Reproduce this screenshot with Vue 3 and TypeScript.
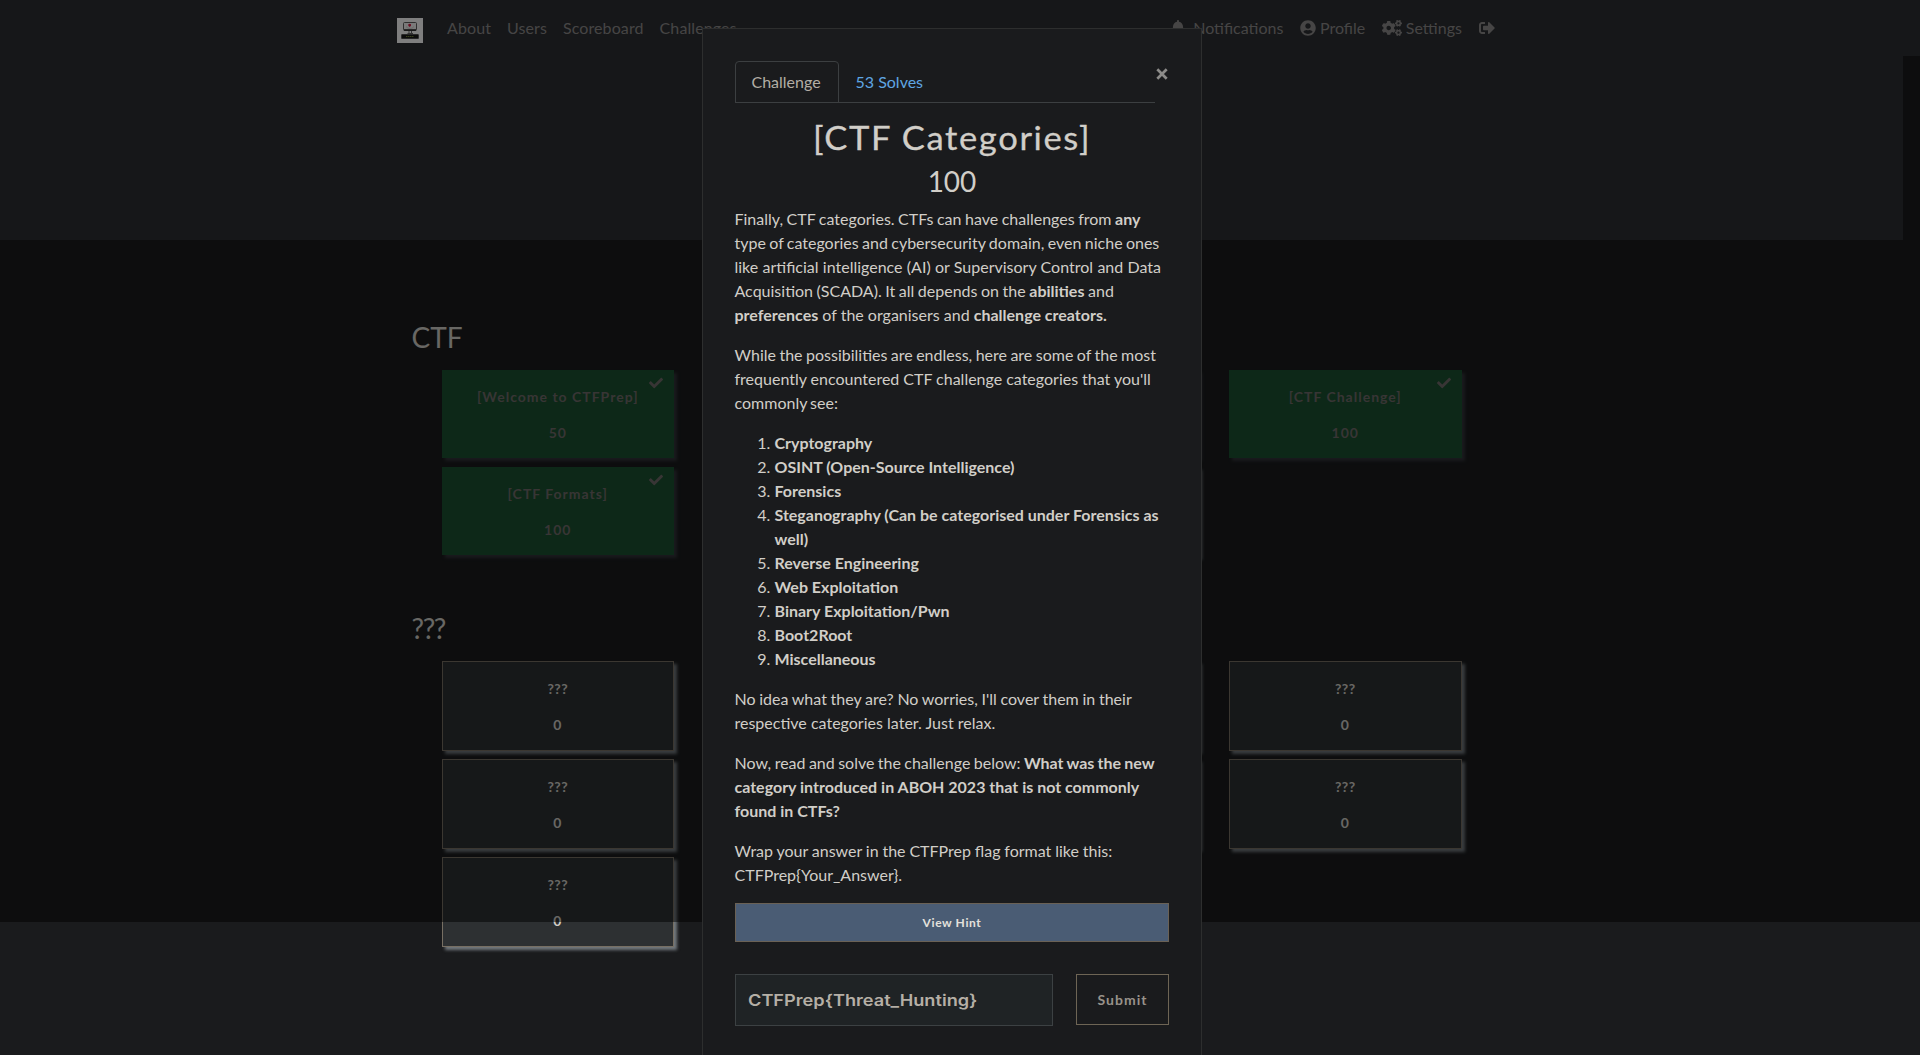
<script setup lang="ts">
interface Card {
  name?: string
  value?: number
  solved?: boolean
}

interface Line {
  html: string
  gap?: number
}

// Cards in the two middle columns sit behind the dialog and carry no label.
const sections: { title: string; rows: Card[][] }[] = [
  {
    title: 'CTF',
    rows: [
      [
        { name: '[Welcome to CTFPrep]', value: 50, solved: true },
        { solved: true },
        { solved: true },
        { name: '[CTF Challenge]', value: 100, solved: true },
      ],
      [{ name: '[CTF Formats]', value: 100, solved: true }, { solved: true }, {}],
    ],
  },
  {
    title: '???',
    rows: [
      [{ name: '???', value: 0 }, {}, {}, { name: '???', value: 0 }],
      [{ name: '???', value: 0 }, {}, {}, { name: '???', value: 0 }],
      [{ name: '???', value: 0 }],
    ],
  },
]

const intro: Line[][] = [
  [
    { html: 'Finally, CTF categories. CTFs can have challenges from <b>any</b>', gap: -0.6 },
    { html: 'type of categories and cybersecurity domain, even niche ones', gap: -0.75 },
    { html: 'like artificial intelligence (AI) or Supervisory Control and Data', gap: 0.2 },
    { html: 'Acquisition (SCADA). It all depends on the <b>abilities</b> and', gap: -0.55 },
    { html: '<b>preferences</b> of the organisers and <b>challenge creators.</b>' },
  ],
  [
    { html: 'While the possibilities are endless, here are some of the most', gap: -0.65 },
    { html: "frequently encountered CTF challenge categories that you'll", gap: -0.1 },
    { html: 'commonly see:', gap: -1 },
  ],
]

const outro: Line[][] = [
  [
    { html: "No idea what they are? No worries, I'll cover them in their", gap: -0.4 },
    { html: 'respective categories later. Just relax.', gap: 0.1 },
  ],
  [
    { html: 'Now, read and solve the challenge below: <b>What was the new</b>', gap: -0.7 },
    { html: '<b>category introduced in ABOH 2023 that is not commonly</b>' },
    { html: '<b>found in CTFs?</b>' },
  ],
  [
    { html: 'Wrap your answer in the CTFPrep flag format like this:', gap: -0.25 },
    { html: 'CTFPrep{Your_Answer}.' },
  ],
]

const topics: string[] = [
  'Cryptography',
  'OSINT (Open-Source Intelligence)',
  'Forensics',
  'Steganography (Can be categorised under Forensics as well)',
  'Reverse Engineering',
  'Web Exploitation',
  'Binary Exploitation/Pwn',
  'Boot2Root',
  'Miscellaneous',
]

const smallGear =
  'M512.1 191l-8.2 14.3c-3 5.3-9.4 7.5-15.1 5.4-11.8-4.4-22.6-10.7-32.1-18.6-4.6-3.8-5.8-10.5-2.8-15.7l8.2-14.3c-6.9-8-12.3-17.3-15.9-27.4h-16.5c-6 0-11.2-4.3-12.2-10.3-2-12-2.1-24.6 0-37.1 1-6 6.2-10.4 12.2-10.4h16.5c3.6-10.1 9-19.4 15.9-27.4l-8.2-14.3c-3-5.2-1.9-11.9 2.8-15.7 9.5-7.9 20.4-14.2 32.1-18.6 5.7-2.1 12.1.1 15.1 5.4l8.2 14.3c10.5-1.9 21.2-1.9 31.7 0L552 6.3c3-5.3 9.4-7.5 15.1-5.4 11.8 4.4 22.6 10.7 32.1 18.6 4.6 3.8 5.8 10.5 2.8 15.7l-8.2 14.3c6.9 8 12.3 17.3 15.9 27.4h16.5c6 0 11.2 4.3 12.2 10.3 2 12 2.1 24.6 0 37.1-1 6-6.2 10.4-12.2 10.4h-16.5c-3.6 10.1-9 19.4-15.9 27.4l8.2 14.3c3 5.2 1.9 11.9-2.8 15.7-9.5 7.9-20.4 14.2-32.1 18.6-5.7 2.1-12.1-.1-15.1-5.4l-8.2-14.3c-10.4 1.9-21.2 1.9-31.7 0zm-10.5-58.8c38.5 29.6 82.4-14.3 52.8-52.8-38.5-29.7-82.4 14.3-52.8 52.8z'
const bigGear =
  'M386.3 286.1l33.7 16.8c10.1 5.8 14.5 18.1 10.5 29.1-8.9 24.2-26.4 46.4-42.6 65.8-7.4 8.9-20.2 11.1-30.3 5.3l-29.1-16.8c-16 13.7-34.6 24.6-54.9 31.7v33.6c0 11.6-8.3 21.6-19.7 23.6-24.6 4.2-50.4 4.4-75.9 0-11.5-2-20-11.9-20-23.6V418c-20.3-7.2-38.9-18-54.9-31.7L74 403c-10 5.8-22.9 3.6-30.3-5.3-16.2-19.4-33.3-41.6-42.2-65.7-4-10.9.4-23.2 10.5-29.1l33.3-16.8c-3.9-20.9-3.9-42.4 0-63.4L12 205.8c-10.1-5.8-14.6-18.1-10.5-29 8.9-24.2 26-46.4 42.2-65.8 7.4-8.9 20.2-11.1 30.3-5.3l29.1 16.8c16-13.7 34.6-24.6 54.9-31.7V57.1c0-11.5 8.2-21.5 19.6-23.5 24.6-4.2 50.5-4.4 76-.1 11.5 2 20 11.9 20 23.6v33.6c20.3 7.2 38.9 18 54.9 31.7l29.1-16.8c10-5.8 22.9-3.6 30.3 5.3 16.2 19.4 33.2 41.6 42.1 65.8 4 10.9.1 23.2-10 29.1l-33.7 16.8c3.9 21 3.9 42.5 0 63.5zm-117.6 21.1c59.2-77-28.7-164.9-105.7-105.7-59.2 77 28.7 164.9 105.7 105.7z'
</script>

<template>
  <div class="page">
    <nav class="navbar">
      <div class="nav-inner">
        <svg class="logo" viewBox="0 0 26 25">
          <rect width="26" height="25" fill="#fff" />
          <rect x="6.5" y="4.5" width="13" height="8" rx="1" fill="#f4f4f4" stroke="#606060" />
          <path d="M7 12h12" stroke="#2a2a2a" stroke-width="1.6" />
          <path d="M11.3 6.3l1.3-.6 1.4.6v1.4l-1.3 1.2-1.4-1.2z" fill="#d8204a" />
          <path d="M9 8.5l2 1.8h4l2-1.8" fill="none" stroke="#ccc" stroke-width=".8" />
          <path d="M12 13v2.500M14.500 13v2.500M10.500 15.500h5.500" stroke="#666" />
          <rect x="4.3" y="16.2" width="17.4" height="4.6" rx=".6" fill="#181818" />
          <path d="M9 18.5h8" stroke="#70803a" stroke-width="1.2" stroke-dasharray="1.5 .5" />
        </svg>
        <div class="links left">
          <a>About</a><a>Users</a><a>Scoreboard</a><a>Challenges</a>
        </div>
        <div class="links right">
          <a>
            <svg class="bell" viewBox="0 0 448 512"><path fill="currentColor" d="M224 512c35.320 0 63.970-28.650 63.970-64H160.030c0 35.350 28.650 64 63.970 64zm215.390-149.710c-19.320-20.760-55.470-51.990-55.470-154.290 0-77.700-54.480-139.900-127.940-155.160V32c0-17.670-14.320-32-31.980-32s-31.980 14.330-31.980 32v20.840C118.560 68.100 64.080 130.300 64.080 208c0 102.300-36.150 133.530-55.470 154.290-6 6.450-8.660 14.160-8.610 21.710.11 16.400 12.980 32 32.100 32h383.800c19.120 0 32-15.600 32.100-32 .05-7.550-2.610-15.270-8.610-21.710z" /></svg><span>Notifications</span>
          </a>
          <a>
            <svg class="user" viewBox="0 0 496 512"><path fill="currentColor" d="M248 8C111 8 0 119 0 256s111 248 248 248 248-111 248-248S385 8 248 8zm0 96c48.600 0 88 39.400 88 88s-39.400 88-88 88-88-39.400-88-88 39.400-88 88-88zm0 344c-58.700 0-111.300-26.600-146.500-68.200 18.800-35.400 55.600-59.800 98.500-59.800 2.400 0 4.800.4 7.100 1.100 13 4.200 26.600 6.900 40.900 6.900 14.300 0 28-2.700 40.900-6.900 2.300-.7 4.700-1.100 7.100-1.100 42.900 0 79.700 24.400 98.500 59.800C359.300 421.400 306.700 448 248 448z" /></svg><span>Profile</span>
          </a>
          <a>
            <svg class="cogs" viewBox="0 0 640 512" fill="currentColor">
              <path :d="smallGear" />
              <path :d="bigGear" />
              <path :d="smallGear" transform="translate(0 298.9)" />
            </svg><span>Settings</span>
          </a>
          <a>
            <svg class="exit" viewBox="0 0 512 512"><path fill="currentColor" d="M497 273L329 441c-15 15-41 4.500-41-17v-96H152c-13.300 0-24-10.700-24-24v-96c0-13.300 10.700-24 24-24h136V88c0-21.400 25.900-32 41-17l168 168c9.300 9.400 9.300 24.600 0 34zM192 436v-40c0-6.600-5.400-12-12-12H96c-17.700 0-32-14.300-32-32V160c0-17.700 14.300-32 32-32h84c6.600 0 12-5.400 12-12V76c0-6.600-5.400-12-12-12H96c-53 0-96 43-96 96v192c0 53 43 96 96 96h84c6.600 0 12-5.400 12-12z" /></svg>
          </a>
        </div>
      </div>
    </nav>
    <header class="jumbotron"></header>
    <main class="board">
      <section v-for="s in sections" :key="s.title" class="category">
        <h3 :class="{ marks: s.title === '???' }">{{ s.title }}</h3>
        <div v-for="(row, i) in s.rows" :key="i" class="row">
          <div v-for="(c, j) in row" :key="j" class="card" :class="{ solved: c.solved }">
            <template v-if="c.name">
              <svg v-if="c.solved" class="check" viewBox="0 0 512 512"><path fill="currentColor" d="M173.898 439.404l-166.400-166.400c-9.997-9.997-9.997-26.206 0-36.204l36.203-36.204c9.997-9.998 26.207-9.998 36.204 0L192 312.690 432.095 72.596c9.997-9.997 26.207-9.997 36.204 0l36.203 36.204c9.997 9.997 9.997 26.206 0 36.204l-294.400 294.401c-9.998 9.997-26.207 9.997-36.204-.001z" /></svg>
              <p :class="{ 'marks-sm': c.name === '???' }">{{ c.name }}</p>
              <span>{{ c.value }}</span>
            </template>
          </div>
        </div>
      </section>
    </main>
    <div class="backdrop"></div>

    <div class="modal">
      <div class="tab-line">
        <div class="tabs">
          <a class="tab active">Challenge</a>
          <a class="tab">53 Solves</a>
        </div>
        <button class="close" aria-label="Close">
          <svg viewBox="0 0 12 12"><path d="M1.3 1.3l9.4 9.4M10.7 1.3l-9.4 9.4" stroke="currentColor" stroke-width="2.7" /></svg>
        </button>
      </div>
      <h2>[CTF Categories]</h2>
      <h3 class="points">100</h3>
      <div class="desc">
        <p v-for="(p, i) in intro" :key="i">
          <span v-for="l in p" :key="l.html" class="line" :style="{ wordSpacing: (l.gap ?? 0) + 'px' }" v-html="l.html"></span>
        </p>
        <ol>
          <li v-for="t in topics" :key="t"><b>{{ t }}</b></li>
        </ol>
        <p v-for="(p, i) in outro" :key="i">
          <span v-for="l in p" :key="l.html" class="line" :style="{ wordSpacing: (l.gap ?? 0) + 'px' }" v-html="l.html"></span>
        </p>
      </div>
      <button class="hint">View Hint</button>
      <div class="answer">
        <div class="field"><span>CTFPrep{Threat_Hunting}</span></div>
        <button class="submit">Submit</button>
      </div>
    </div>
  </div>
</template>

<style>
body {
  margin: 0;
  background: #1a1b1c;
  overflow: hidden;
}
</style>

<style scoped>
* {
  box-sizing: border-box;
}
.page {
  position: relative;
  width: 1920px;
  height: 1055px;
  overflow: hidden;
  background: #1a1b1d;
  color: #d1cec8;
  font: 16px/24px Lato, sans-serif;
}
.navbar {
  height: 56px;
  background: #2d2f32;
}
.nav-inner {
  display: flex;
  align-items: center;
  width: 1105.5px;
  height: 56px;
  margin-left: 397px;
  color: #8c8a8a;
}
.logo {
  width: 26px;
  height: 25px;
  margin: 4px 16px 0 0;
}
.links {
  display: flex;
}
.links a {
  display: flex;
  align-items: center;
  padding: 0 8px;
}
.left {
  letter-spacing: 0.1px;
}
.right {
  margin-left: auto;
}
.right a {
  padding-left: 8.6px;
}
.right a span {
  margin-left: 4px;
}
.right svg {
  height: 16px;
  display: block;
}
.right .bell {
  width: 14px;
  margin-right: 4px;
}
.user {
  width: 16px;
}
.cogs {
  width: 20px;
}
.exit {
  width: 16px;
}
.jumbotron {
  width: 1903px;
  height: 184px;
  background: #2d2f32;
}
.board {
  width: 1110px;
  height: 815px;
  margin-left: 411.5px;
  padding-top: 80px;
}
.category h3 {
  margin: 0;
  height: 50px;
  font-size: 28px;
  line-height: 34px;
  font-weight: 400;
}
.category h3.marks {
  letter-spacing: -1.4px;
}
.category + .category {
  padding-top: 48px;
}
.category:first-child {
  height: 243px;
}
.row {
  display: flex;
  gap: 30px;
  margin-left: 30px;
  margin-bottom: 8px;
}
.row .solved {
  margin-bottom: 1px;
}
.card {
  position: relative;
  width: 232.5px;
  height: 90px;
  padding-top: 16px;
  border: 1px solid #776f63;
  background: #2d3032;
  box-shadow: 3px 3px 3px #72787d;
  text-align: center;
  font-size: 14px;
  font-weight: 700;
  line-height: 21px;
  letter-spacing: 1px;
}
.card p {
  margin: 0 0 15px;
}
.card p.marks-sm {
  letter-spacing: 0.4px;
}
.card span {
  display: block;
}
.card.solved {
  height: 88px;
  border: 0;
  background: #1b5030;
  box-shadow: 3px 3px 3px #33343a;
  color: #706b6b;
}
.check {
  position: absolute;
  top: 6px;
  right: 11px;
  width: 14px;
  height: 14px;
}
.backdrop {
  position: absolute;
  inset: 0 0 133px 0;
  background: rgba(0, 0, 0, 0.5);
}
.modal {
  position: absolute;
  left: 702px;
  top: 28px;
  width: 500px;
  height: 1100px;
  padding: 32px;
  border: 1px solid #2d2e2e;
  background: #1a1b1d;
}
.tab-line {
  display: flex;
}
.tabs {
  display: flex;
  width: 420px;
  height: 42px;
  border-bottom: 1px solid #3c3f41;
}
.tab {
  height: 42px;
  padding: 8px 15.5px;
  border: 1px solid transparent;
  color: #5fa6e3;
}
.tab.active {
  width: 104px;
  border-color: #3c3f41;
  border-radius: 4px 4px 0 0;
  color: #b3aea5;
}
button {
  padding: 0;
  font-family: Lato, sans-serif;
}
.close {
  width: 12px;
  height: 12px;
  margin: 7px 0 0 0.5px;
  border: 0;
  background: none;
  color: #8c8b89;
}
.close svg {
  display: block;
}
h2 {
  margin: 16px 0 0;
  font-size: 32px;
  line-height: 38px;
  font-weight: 400;
  letter-spacing: 1.5px;
  text-align: center;
  transform: scaleX(1.08);
  -webkit-text-stroke: 0.3px currentColor;
}
.points {
  margin: 7px 0 9px;
  font-size: 28px;
  line-height: 34px;
  font-weight: 400;
  text-align: center;
}
.desc {
  margin-left: -0.5px;
}
.desc p,
.desc ol {
  margin: 0 0 16px;
}
.desc ol {
  padding-left: 40px;
}
.line {
  display: block;
  white-space: nowrap;
}
.hint {
  display: block;
  width: 434px;
  height: 39px;
  border: 1px solid #6a6155;
  background: #4a5c74;
  color: #e4e1dc;
  font-size: 12px;
  font-weight: 700;
  letter-spacing: 0.6px;
}
.answer {
  display: flex;
  justify-content: space-between;
  margin-top: 32px;
}
.field {
  width: 318px;
  height: 52px;
  padding-left: 12px;
  border: 1px solid #3c4143;
  background: #1f2325;
  color: #b5afa6;
  font: 600 16px/51px Inter, sans-serif;
}
.field span {
  display: inline-block;
  transform: scaleX(1.135);
  transform-origin: left;
}
.submit {
  width: 93px;
  height: 51px;
  border: 1px solid #6e6555;
  background: none;
  color: #98928a;
  font-size: 14px;
  font-weight: 700;
  letter-spacing: 1px;
}
</style>
